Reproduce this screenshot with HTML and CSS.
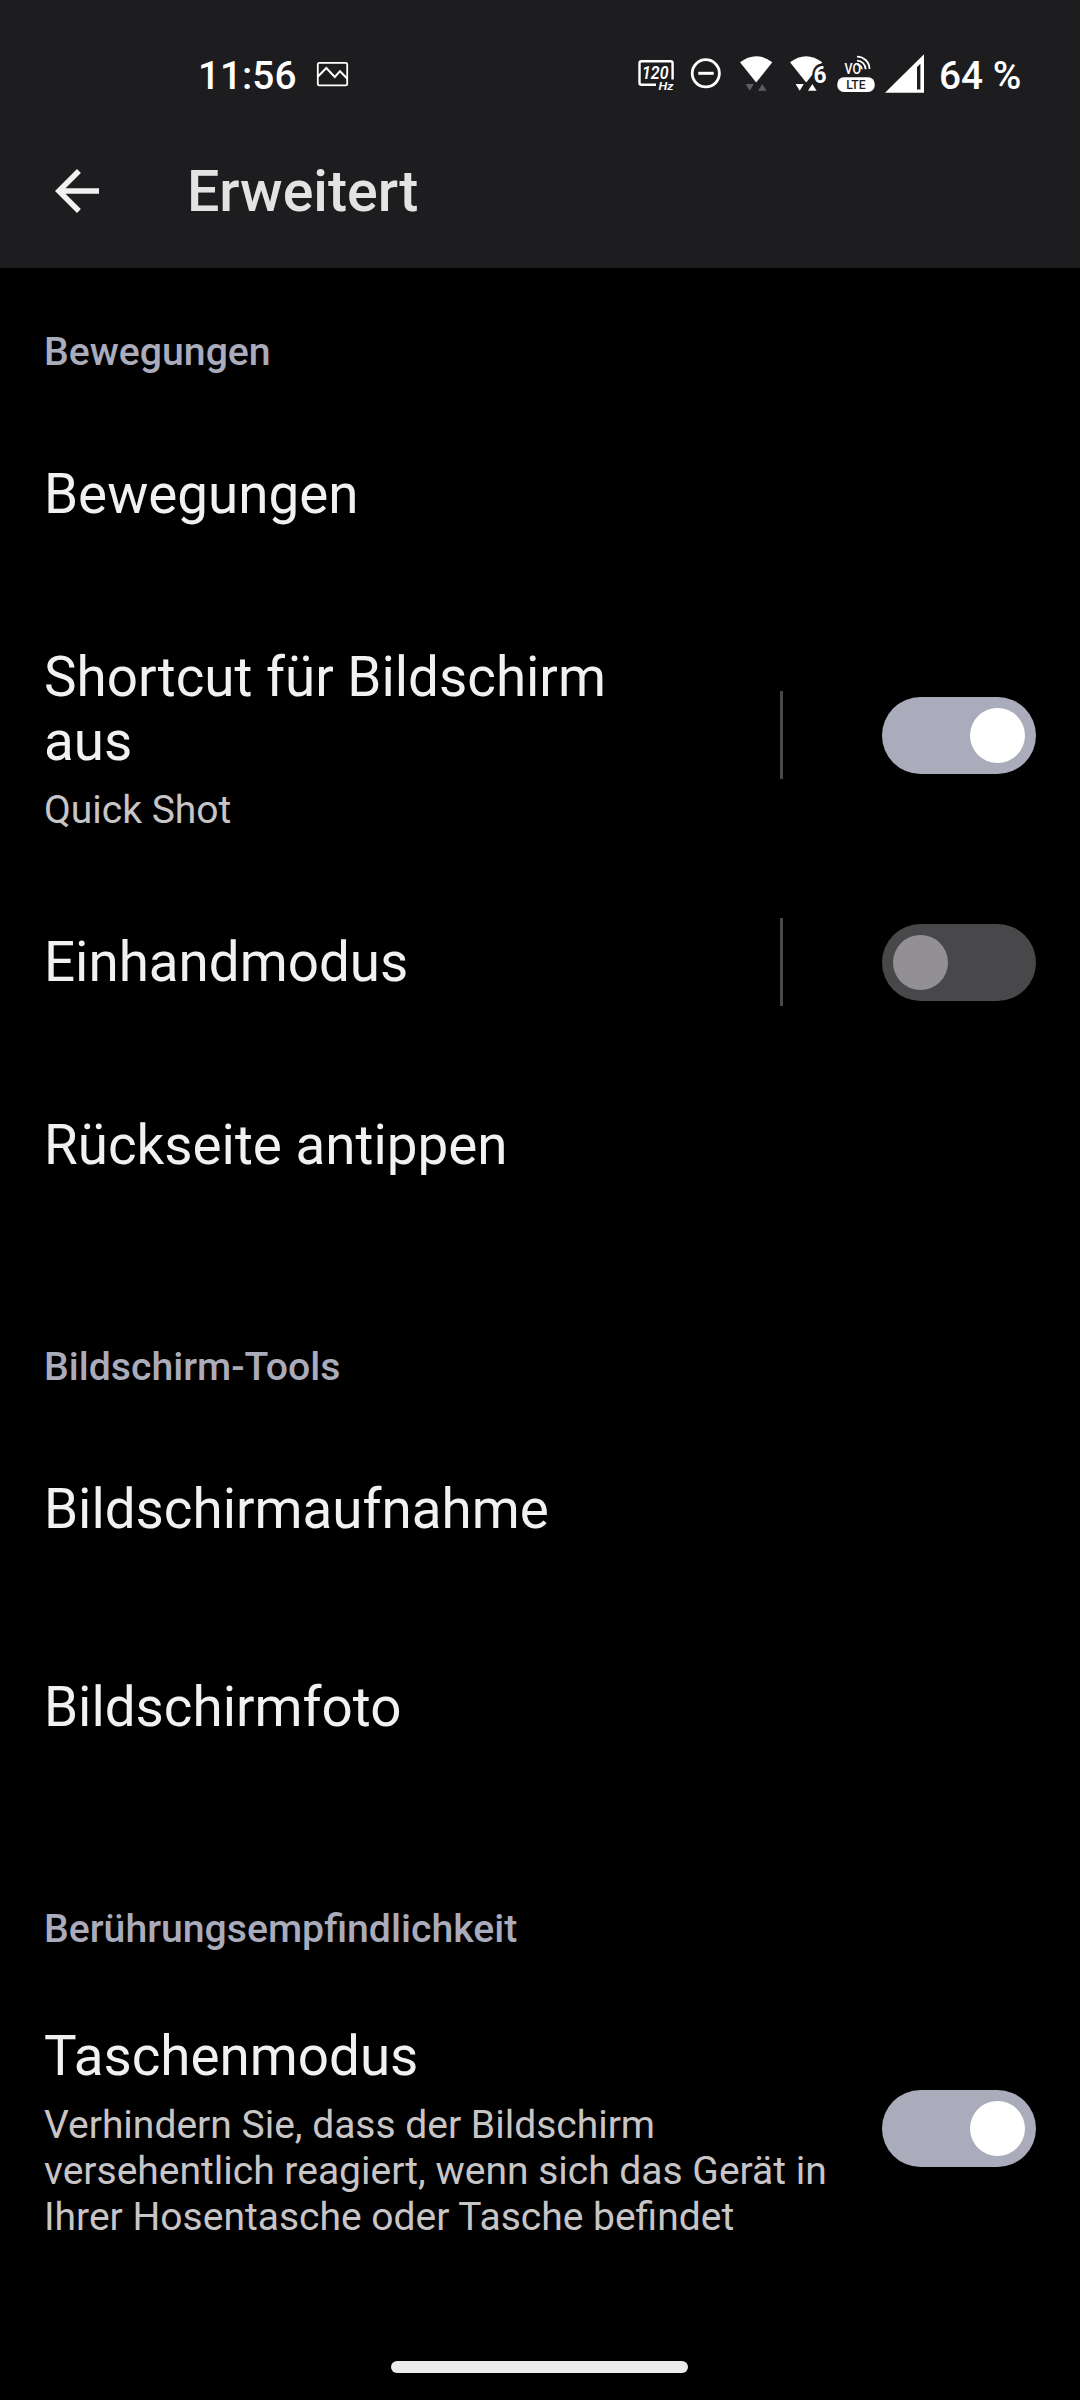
FILE: index.html
```html
<!DOCTYPE html>
<html lang="de">
<head>
<meta charset="utf-8">
<title>Erweitert</title>
<link rel="stylesheet" href="styles.css">
</head>
<body>
<header class="top">
  <div class="status">
    <span class="clock">11:56</span>
    <svg class="notification" width="34" height="28" viewBox="315 60 34 28" fill="none" stroke="#fff">
      <rect x="317.8" y="62.8" width="29.4" height="22.6" rx="1.5" stroke-width="1.8"/>
      <path d="M318 76.5L326.3 68l8.5 9 5.2-5.8 7.4 7.6" stroke-width="2"/>
    </svg>
    <svg class="indicators" width="290" height="44" viewBox="636 52 290 44" fill="#fff">
      <!-- refresh rate -->
      <path d="M656 84.7H641.5a2 2 0 0 1-2-2V63.3a2 2 0 0 1 2-2H670.6a2 2 0 0 1 2 2V79.5" fill="none" stroke="#fff" stroke-width="2.4"/>
      <text class="glyph italic" x="642" y="79" font-size="17.5" textLength="26.5" lengthAdjust="spacingAndGlyphs">120</text>
      <text class="glyph italic" x="658.5" y="90" font-size="11.5" textLength="15" lengthAdjust="spacingAndGlyphs">Hz</text>
      <!-- do not disturb -->
      <circle cx="705.8" cy="73.3" r="13.6" fill="none" stroke="#fff" stroke-width="2.8"/>
      <path d="M698.3 71.8h15.4v3h-15.4z"/>
      <!-- wifi -->
      <path d="M740 62.3Q756 50 772.3 62.3L756.2 82.6z"/>
      <path class="idle" d="M745.6 84h8.2l-4.1 6.7zM758 90.7h8.6L762.3 84z"/>
      <!-- wifi 6 -->
      <path d="M790 62.3Q806 50 822.3 62.3L806.2 82.6z"/>
      <text class="glyph six" x="813.5" y="82.5" font-size="24.5" textLength="13" lengthAdjust="spacingAndGlyphs">6</text>
      <path d="M795.6 84h8.2l-4.1 6.7zM808 90.7h8.6L812.3 84z"/>
      <!-- VoLTE -->
      <text class="glyph vo" x="844.6" y="73.7" font-size="14" textLength="16.5" lengthAdjust="spacingAndGlyphs">VO</text>
      <path d="M857 56.6a12.5 12.5 0 0 1 12.5 12.5M857 60.7a8.6 8.6 0 0 1 8.6 8.6M857 64.5a5 5 0 0 1 4.8 4.8" fill="none" stroke="#fff" stroke-width="1.8"/>
      <rect x="837.3" y="77.3" width="37.4" height="14.7" rx="6.5"/>
      <text class="glyph lte" x="846.3" y="88.8" font-size="12" textLength="19.3" lengthAdjust="spacingAndGlyphs">LTE</text>
      <!-- mobile signal -->
      <path fill-rule="evenodd" d="M885 92.8L924 54.2V92.8zM917 67v22.5h3.4V63.8z"/>
    </svg>
    <span class="battery">64 %</span>
  </div>
  <div class="appbar">
    <svg width="66" height="66" viewBox="0 0 24 24" fill="#f3f0f1"><path d="M20 11H7.83l5.59-5.59L12 4l-8 8 8 8 1.41-1.41L7.83 13H20v-2z"/></svg>
    <h1 class="title">Erweitert</h1>
  </div>
</header>
<main>
  <section class="group">
    <h2 class="category">Bewegungen</h2>
    <div class="row"><div class="label">Bewegungen</div></div>
    <div class="row row-shortcut">
      <div class="label has-summary">Shortcut für Bildschirm aus<p class="summary">Quick Shot</p></div>
      <span class="divider"></span><span class="switch on"></span>
    </div>
    <div class="row row-short">
      <div class="label">Einhandmodus</div>
      <span class="divider"></span><span class="switch"></span>
    </div>
    <div class="row row-last"><div class="label">Rückseite antippen</div></div>
  </section>
  <section class="group">
    <h2 class="category">Bildschirm-Tools</h2>
    <div class="row"><div class="label">Bildschirmaufnahme</div></div>
    <div class="row"><div class="label">Bildschirmfoto</div></div>
  </section>
  <section class="group">
    <h2 class="category">Berührungsempfindlichkeit</h2>
    <div class="row row-pocket">
      <div class="label has-summary">Taschenmodus<p class="summary">Verhindern Sie, dass der Bildschirm versehentlich reagiert, wenn sich das Gerät in Ihrer Hosentasche oder Tasche befindet</p></div>
      <span class="switch on"></span>
    </div>
  </section>
</main>
<footer class="nav"><span class="handle"></span></footer>
</body>
</html>
```
FILE: styles.css
```css
* { box-sizing: border-box; }

body {
  margin: 0;
  width: 1080px;
  height: 2400px;
  display: flex;
  flex-direction: column;
  background: #000;
  color: #f3f0f1;
  font-family: Roboto, sans-serif;
  overflow: hidden;
}

h1, h2, p { margin: 0; }
svg { display: block; flex: none; }

.top {
  height: 268px;
  flex: none;
  background: #1d1d1f;
}

.status {
  height: 114px;
  padding: 52px 0 0 198px;
  display: flex;
  align-items: flex-start;
  color: #fff;
  font-size: 38.8px;
  font-weight: 500;
  line-height: 48px;
  white-space: pre;
}

.clock { width: 117px; }
.notification { margin-top: 8px; }
.indicators { margin-left: 287px; }
.battery { margin-left: 13px; }

.glyph {
  font-family: Roboto, sans-serif;
  font-weight: 500;
}
.italic {
  font-style: italic;
  font-weight: 600;
}
.six {
  font-weight: 700;
  stroke: #1d1d1f;
  stroke-width: 5px;
  paint-order: stroke;
}
.lte { fill: #1d1d1f; }
.idle { fill: #5d5d5f; }

.appbar {
  height: 154px;
  padding-left: 44px;
  display: flex;
  align-items: center;
  gap: 77px;
}

.title {
  padding-top: 2px;
  color: #e5e2e3;
  font-size: 57.3px;
  font-weight: 500;
  line-height: 68px;
}

.group { padding-bottom: 39px; }

.category {
  height: 127px;
  padding: 61px 44px 0;
  color: #aaabbb;
  font-size: 39.2px;
  font-weight: 500;
  line-height: 46px;
}

.row {
  height: 198px;
  padding: 0 44px;
  display: flex;
  align-items: center;
}
.row-shortcut { height: 285px; }
.row-short { height: 169px; }
.row-short .label { padding-bottom: 1px; }
.row-last {
  height: 196px;
  margin-bottom: 40px;
}
.group:has(.row-last) { padding-bottom: 0; }
.row-pocket { height: 313px; }

.label {
  flex: 1;
  padding-right: 44px;
  font-size: 54.75px;
  line-height: 64px;
}
.row-shortcut .label { padding-right: 110px; }
.has-summary { padding-top: 7px; }

.summary {
  margin-top: 14px;
  color: #c8c5c6;
  font-size: 39px;
  line-height: 46px;
}
.row-pocket .label { padding-right: 32px; }

.divider {
  width: 3px;
  height: 88px;
  margin: 0 99px 1px 0;
  background: #48484a;
}

.switch {
  flex: none;
  width: 154px;
  height: 77px;
  padding: 11px;
  display: flex;
  border-radius: 39px;
  background: #48484a;
}
.switch::before {
  content: "";
  width: 55px;
  height: 55px;
  border-radius: 50%;
  background: #929092;
}
.switch.on {
  justify-content: flex-end;
  background: #aaabbb;
}
.switch.on::before { background: #fff; }

.nav {
  margin-top: auto;
  padding: 0 1px 27px 0;
  display: flex;
  justify-content: center;
}
.handle {
  width: 297px;
  height: 12px;
  border-radius: 6px;
  background: #ebebeb;
}
```
